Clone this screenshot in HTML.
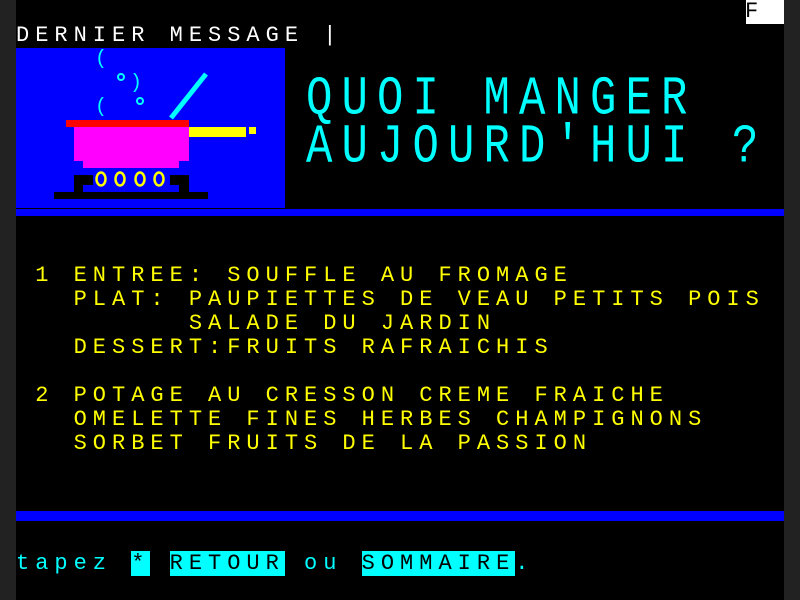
<!DOCTYPE html>
<html><head><meta charset="utf-8"><style>
html,body{margin:0;padding:0;background:#000;}
#s{position:relative;width:800px;height:600px;background:#000;overflow:hidden;font-family:"Liberation Mono",monospace;}
.m{position:absolute;top:0;width:16px;height:600px;background:#222;}
.t{position:absolute;left:16px;white-space:pre;font-size:22px;line-height:24px;height:24px;letter-spacing:6px;font-weight:normal;}
.y{color:#ff0;}.c{color:#0ff;}.w{color:#fff;}
.hl{background:#0ff;color:#000;}
.big{transform:scale(2,2.5);transform-origin:0 0;letter-spacing:4.55px;}
</style></head><body><div id="s">
<div class="m" style="left:0"></div><div class="m" style="left:784px"></div>
<div style="position:absolute;left:746px;top:0;width:38px;height:24px;background:#fff;"></div>
<div class="t" style="left:745px;top:0;color:#000;">F</div>
<div class="t w" style="top:24px;">DERNIER MESSAGE |</div>
<div style="position:absolute;left:16px;top:48px;width:269px;height:160px;background:#00f;"></div>
<svg style="position:absolute;left:0;top:0" width="300" height="210">
<line x1="171" y1="118" x2="206" y2="74" stroke="#0ff" stroke-width="5"/>
<text x="95" y="64" fill="#0ff" font-family="Liberation Mono" font-size="20">(</text>
<text x="95" y="112" fill="#0ff" font-family="Liberation Mono" font-size="20">(</text>
<text x="130" y="88" fill="#0ff" font-family="Liberation Mono" font-size="20">)</text>
<circle cx="121" cy="77" r="3" fill="none" stroke="#0ff" stroke-width="2"/>
<circle cx="140" cy="101" r="3" fill="none" stroke="#0ff" stroke-width="2"/>
<rect x="66" y="120" width="123" height="7" fill="#f00"/>
<rect x="74" y="127" width="115" height="34" fill="#f0f"/>
<rect x="83" y="161" width="96" height="7" fill="#f0f"/>
<rect x="189" y="127" width="57" height="10" fill="#ff0"/>
<rect x="249" y="127" width="7" height="7" fill="#ff0"/>
<rect x="74" y="175" width="19" height="10" fill="#000"/>
<rect x="74" y="185" width="9" height="7" fill="#000"/>
<rect x="170" y="175" width="19" height="10" fill="#000"/>
<rect x="179" y="185" width="10" height="7" fill="#000"/>
<rect x="54" y="192" width="154" height="7" fill="#000"/>
<ellipse cx="101" cy="179" rx="4.5" ry="6.5" fill="none" stroke="#ff0" stroke-width="2.5"/>
<ellipse cx="120" cy="179" rx="4.5" ry="6.5" fill="none" stroke="#ff0" stroke-width="2.5"/>
<ellipse cx="140" cy="179" rx="4.5" ry="6.5" fill="none" stroke="#ff0" stroke-width="2.5"/>
<ellipse cx="159" cy="179" rx="4.5" ry="6.5" fill="none" stroke="#ff0" stroke-width="2.5"/>
</svg>
<div class="t c big" style="left:306px;top:71px;">QUOI MANGER</div>
<div class="t c big" style="left:306px;top:119px;">AUJOURD'HUI ?</div>
<div style="position:absolute;left:16px;top:209px;width:768px;height:7px;background:#00f;"></div>
<div class="t y" style="top:264px;"> 1 ENTREE: SOUFFLE AU FROMAGE</div>
<div class="t y" style="top:288px;">   PLAT: PAUPIETTES DE VEAU PETITS POIS</div>
<div class="t y" style="top:312px;">         SALADE DU JARDIN</div>
<div class="t y" style="top:336px;">   DESSERT:FRUITS RAFRAICHIS</div>
<div class="t y" style="top:384px;"> 2 POTAGE AU CRESSON CREME FRAICHE</div>
<div class="t y" style="top:408px;">   OMELETTE FINES HERBES CHAMPIGNONS</div>
<div class="t y" style="top:432px;">   SORBET FRUITS DE LA PASSION</div>
<div style="position:absolute;left:16px;top:511px;width:768px;height:10px;background:#00f;"></div>
<div class="t c" style="top:552px;">tapez <span class="hl">*</span> <span class="hl">RETOUR</span> ou <span class="hl">SOMMAIRE</span>.</div>
</div></body></html>
